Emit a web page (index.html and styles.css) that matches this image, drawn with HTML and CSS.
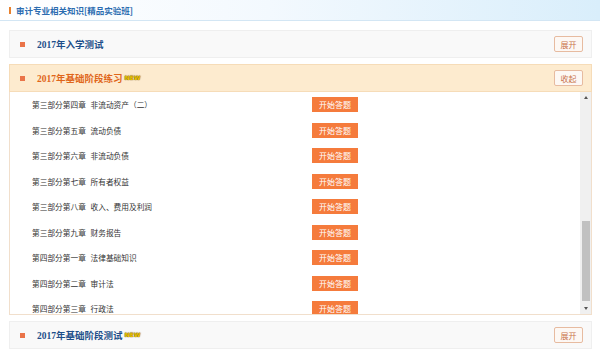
FILE: index.html
```html
<!DOCTYPE html>
<html lang="zh">
<head>
<meta charset="utf-8">
<link rel="stylesheet" href="styles.css">
</head>
<body>
<div class="topbar"><span class="topbar-mark"></span><span class="topbar-title">审计专业相关知识[精品实验班]</span></div>
<div class="wrap">
  <div class="panel">
    <div class="panel-head">
      <span class="bullet"></span>
      <span class="panel-title">2017年入学测试</span>
      <span class="toggle">展开</span>
    </div>
  </div>
  <div class="panel panel-open">
    <div class="panel-head">
      <span class="bullet"></span>
      <span class="panel-title">2017年基础阶段练习</span><span class="new">NEW</span>
      <span class="toggle">收起</span>
    </div>
    <div class="panel-body">
      <div class="list">
        <div class="row"><span class="row-name">第三部分第四章 非流动资产（二）</span><span class="start">开始答题</span></div>
        <div class="row"><span class="row-name">第三部分第五章 流动负债</span><span class="start">开始答题</span></div>
        <div class="row"><span class="row-name">第三部分第六章 非流动负债</span><span class="start">开始答题</span></div>
        <div class="row"><span class="row-name">第三部分第七章 所有者权益</span><span class="start">开始答题</span></div>
        <div class="row"><span class="row-name">第三部分第八章 收入、费用及利润</span><span class="start">开始答题</span></div>
        <div class="row"><span class="row-name">第三部分第九章 财务报告</span><span class="start">开始答题</span></div>
        <div class="row"><span class="row-name">第四部分第一章 法律基础知识</span><span class="start">开始答题</span></div>
        <div class="row"><span class="row-name">第四部分第二章 审计法</span><span class="start">开始答题</span></div>
        <div class="row"><span class="row-name">第四部分第三章 行政法</span><span class="start">开始答题</span></div>
      </div>
      <div class="scrollbar">
        <span class="arrow arrow-up"></span>
        <div class="track"><div class="thumb"></div></div>
        <span class="arrow arrow-down"></span>
      </div>
    </div>
  </div>
  <div class="panel">
    <div class="panel-head">
      <span class="bullet"></span>
      <span class="panel-title">2017年基础阶段测试</span><span class="new">NEW</span>
      <span class="toggle">展开</span>
    </div>
  </div>
</div>
</body>
</html>
```
FILE: styles.css
```css
* { box-sizing: border-box; }
body {
  margin: 0;
  background: #fff;
  font-family: "Noto Sans CJK SC", "Noto Sans", sans-serif;
  overflow: hidden;
}
.topbar {
  height: 21px;
  display: flex;
  align-items: center;
  padding-left: 9px;
  background: linear-gradient(to right, #ffffff 0%, #f3f9fe 45%, #d9eefb 100%);
  border-bottom: 1px solid #d3e6f4;
}
.topbar-mark {
  width: 2px;
  height: 7px;
  background: #e8812e;
  margin-right: 5px;
}
.topbar-title {
  font-size: 8.5px;
  color: #2b6cb0;
  font-weight: bold;
  line-height: 1;
}
.wrap {
  padding: 9px 8px 0 9px;
  display: flex;
  flex-direction: column;
  gap: 6px;
}
.panel-head {
  height: 28px;
  display: flex;
  align-items: center;
  padding: 0 8px 0 10px;
  background: #f9f9f9;
  border: 1px solid #efefef;
}
.bullet {
  width: 5px;
  height: 5px;
  background: #ea7449;
  margin-right: 12px;
}
.panel-title {
  font-family: "Liberation Serif", "Noto Sans CJK SC", serif;
  font-size: 9.5px;
  font-weight: bold;
  color: #1e4f8a;
}
.new {
  font-family: "DejaVu Sans", sans-serif;
  font-size: 6px;
  font-weight: bold;
  color: #f0c800;
  text-shadow: 0 0 1px #6a4a00, 0 0 1px #6a4a00;
  margin-left: 2px;
  position: relative;
  top: -1px;
}
.toggle {
  margin-left: auto;
  width: 29px;
  height: 16px;
  border: 1px solid #e7bba0;
  border-radius: 2px;
  background: #fdf8f4;
  color: #c9744c;
  font-size: 8px;
  display: flex;
  align-items: center;
  justify-content: center;
}
.panel-open .panel-head {
  background: #fdebcf;
  border-color: #f6dcb8;
}
.panel-open .panel-title { color: #e0661a; }
.panel-body {
  height: 223px;
  display: flex;
  border: 1px solid #f1dfcc;
  border-top: none;
  overflow: hidden;
}
.list {
  flex: 1;
  padding-left: 22px;
}
.row {
  height: 25.5px;
  display: grid;
  grid-template-columns: 280px 46px;
  align-items: center;
}
.row-name {
  font-size: 7.7px;
  word-spacing: 3px;
  color: #333;
}
.start {
  height: 15px;
  background: #f57b3c;
  color: #fff;
  font-size: 8px;
  display: flex;
  align-items: center;
  justify-content: center;
}
.scrollbar {
  width: 11px;
  background: #f0f0f0;
  display: flex;
  flex-direction: column;
  align-items: center;
}
.arrow {
  width: 0;
  height: 0;
  border-left: 2.5px solid transparent;
  border-right: 2.5px solid transparent;
  margin: 4px 0;
}
.arrow-up { border-bottom: 3px solid #555; }
.arrow-down { border-top: 3px solid #555; }
.track {
  flex: 1;
  width: 100%;
  display: flex;
  flex-direction: column;
  justify-content: flex-end;
  padding: 0 1.5px 2px;
}
.thumb {
  height: 80px;
  background: #c1c1c1;
}
```
